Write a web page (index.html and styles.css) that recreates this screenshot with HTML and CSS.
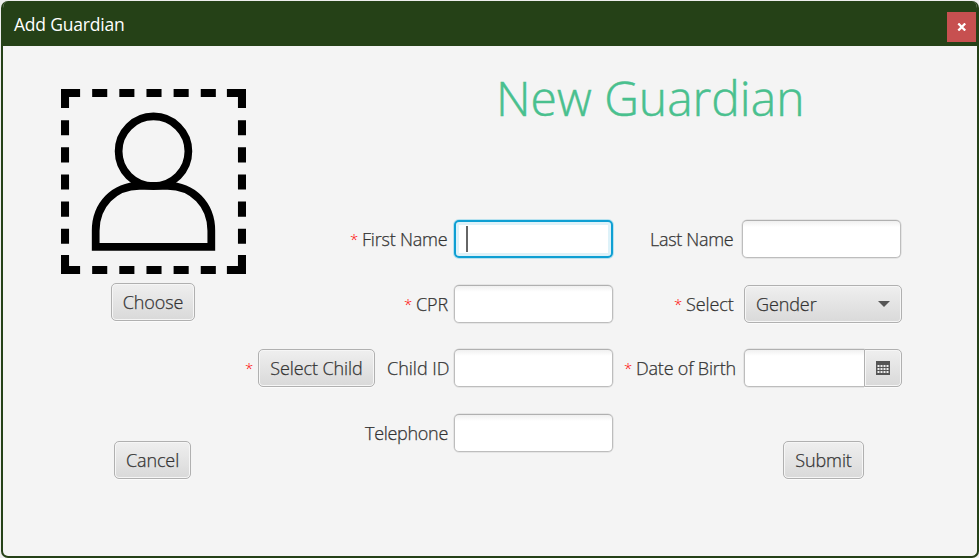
FILE: index.html
```html
<!DOCTYPE html>
<html lang="en">
<head>
<meta charset="utf-8">
<title>Add Guardian</title>
<link rel="stylesheet" href="styles.css">
</head>
<body>
<div class="window">
  <header class="titlebar">
    <span class="title">Add Guardian</span>
    <button class="close" aria-label="Close"><svg width="10" height="8" viewBox="0 0 10 8"><path d="M1.300 .5L8.200 7.500M8.200 .5L1.300 7.500" stroke="#fff" stroke-width="2.300"/></svg></button>
  </header>
  <main class="content">
    <aside class="side">
      <svg class="avatar" width="187" height="187" viewBox="0 0 186 186" fill="none" stroke="#000" stroke-width="8">
        <path d="M5 20V5H20M166 5H181V20M181 166V181H166M20 181H5V166"/>
        <path d="M32 5H47M59 5H74M86 5H101M113 5H128M140 5H155M32 181H47M59 181H74M86 181H101M113 181H128M140 181H155M5 32V47M5 59V74M5 86V101M5 113V128M5 140V155M181 32V47M181 59V74M181 86V101M181 113V128M181 140V155"/>
        <circle cx="93" cy="63" r="34.700" stroke-width="7.700"/>
        <path d="M35.500 158V142C35.500 116 54 97.300 79 97.300H107C132 97.300 150.500 116 150.500 142V158Z" stroke-width="7.700"/>
      </svg>
      <button class="btn choose">Choose</button>
      <button class="btn cancel">Cancel</button>
    </aside>
    <section class="form">
      <h1>New Guardian</h1>
      <div class="rows">
        <div class="row">
          <div class="label"><i>*</i><span class="first">First Name</span></div>
          <div class="input focused"><span class="caret"></span></div>
          <div class="label"><span class="last">Last Name</span></div>
          <div class="input shifted"></div>
        </div>
        <div class="row">
          <div class="label"><i>*</i><span class="cpr">CPR</span></div>
          <div class="input"></div>
          <div class="label"><i>*</i><span class="select">Select</span></div>
          <div class="btn combo"><span>Gender</span><b class="arrow"></b></div>
        </div>
        <div class="row">
          <div class="label"><i>*</i><button class="btn child">Select Child</button><span class="child-id">Child ID</span></div>
          <div class="input"></div>
          <div class="label"><i>*</i><span class="birth">Date of Birth</span></div>
          <div class="date"><div class="input"></div><div class="btn picker"><svg width="14" height="14" viewBox="0 0 14 14"><path d="M0 0H14V14H0Z" fill="#555"/><path d="M1.500 5H13M1.500 8H13M1.500 11H13" stroke="#eee" stroke-width="2" stroke-dasharray="2 1"/></svg></div></div>
        </div>
        <div class="row">
          <div class="label"><span class="phone">Telephone</span></div>
          <div class="input"></div>
        </div>
      </div>
      <button class="btn submit">Submit</button>
    </section>
  </main>
</div>
</body>
</html>
```
FILE: styles.css
```css
* { box-sizing: border-box; }
body {
  margin: 0;
  height: 558px;
  padding: 1px 0 0 1px;
  overflow: hidden;
  background: #eee;
  color: #333;
  font: 300 18px/24px "Open Sans", "Noto Sans", sans-serif;
  letter-spacing: -0.1px;
  -webkit-text-stroke: 0.25px currentColor;
}
button { font: inherit; color: inherit; padding: 0; letter-spacing: inherit; }
.window {
  height: 557px;
  border: 2px solid #254117;
  border-top: 0;
  border-radius: 7px;
  background: #f4f4f4;
  overflow: hidden;
  display: flex;
  flex-direction: column;
}
.titlebar {
  height: 45px;
  flex: none;
  background: #254117;
  color: #fff;
  display: flex;
  justify-content: space-between;
  padding: 11px 1px 0 11px;
}
.title { font-weight: 400; font-size: 17.500px; letter-spacing: -0.2px; -webkit-text-stroke: 0; }
.close {
  width: 29px;
  height: 30px;
  border: 0;
  background: #c75050;
  display: flex;
  align-items: center;
  justify-content: center;
  padding-left: 1px;
}
.content { flex: 1; display: flex; }
.side {
  width: 241px;
  flex: none;
  padding: 41.500px 0 0 56.500px;
  display: flex;
  flex-direction: column;
  align-items: flex-start;
}
.avatar { display: block; flex: none; }
.btn {
  height: 38px;
  display: flex;
  align-items: center;
  justify-content: center;
  border: 1px solid #b0b0b0;
  border-radius: 5px;
  background: linear-gradient(#efefef, #d9d9d9);
  box-shadow: inset 0 0 0 1px #f6f6f6, 0 1px 0 #fbfbfb;
  white-space: nowrap;
}
.choose { width: 84px; margin: 8.500px 0 0 51.500px; }
.cancel { width: 77px; margin: 120px 0 0 54.500px; }
.form { width: 658px; display: flex; flex-direction: column; }
h1 {
  margin: 20px 0 0 252px;
  font-weight: 300;
  font-size: 48px;
  line-height: 64px;
  letter-spacing: 0;
  color: #49c08e;
  -webkit-text-stroke: 0.5px currentColor;
  white-space: nowrap;
}
.rows { margin-top: 90px; display: grid; row-gap: 26.500px; }
.row { display: grid; grid-template-columns: 206px 159px 131px 162px; height: 38px; }
.row > :nth-child(2) { margin-left: 4px; width: 159px; }
.row > :nth-child(4) { margin-left: 4px; width: 158px; }
.row > .shifted:nth-child(4) { margin-left: 2px; width: 159px; }
.label { display: flex; align-items: center; justify-content: flex-end; white-space: nowrap; }
.label span { flex: none; }
.label i { font-style: normal; font-size: 15px; color: #f00; width: 12px; -webkit-text-stroke: 0; }
.first { width: 88px; letter-spacing: -0.2px; }
.cpr { width: 34px; }
.last { width: 90px; letter-spacing: -0.3px; }
.select { width: 54px; }
.child-id { width: 63px; margin-left: 12px; letter-spacing: 0; }
.birth { width: 104px; letter-spacing: -0.2px; }
.phone { width: 85px; letter-spacing: -0.3px; }
.child { width: 117px; margin-left: 1px; }
.input {
  height: 38px;
  border: 1px solid #bdbdbd;
  border-top-color: #b0b0b0;
  border-radius: 5px;
  background: linear-gradient(#f0f0f0, #fff 6px);
  box-shadow: 0 0 0 .5px #d5d5d5;
}
.focused {
  border: 2px solid #0e9fd3;
  background: #fff;
  box-shadow: 0 0 0 1px #b8e2ef, inset 0 0 0 3px #def2f9;
  padding: 4px 0 0 10px;
}
.caret { display: block; width: 2px; height: 26px; background: #666; }
.combo { justify-content: space-between; padding: 0 11px; }
.arrow { border: 6px solid transparent; border-top-color: #555; border-bottom: 0; }
.date { display: flex; }
.date .input { width: 120px; border-right: 0; border-radius: 5px 0 0 5px; }
.picker { width: 38px; border-radius: 0 5px 5px 0; }
.submit { width: 81px; margin: -11px 0 0 539px; }
```
